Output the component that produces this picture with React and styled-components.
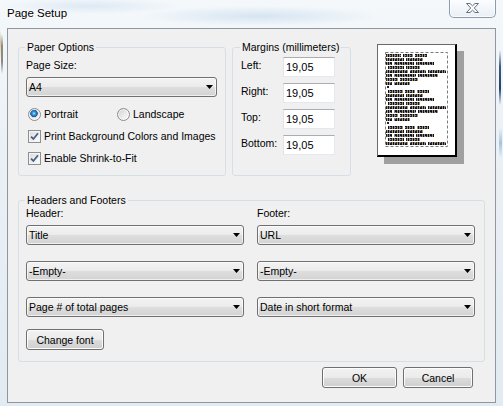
import React from "react";
import styled, { createGlobalStyle } from "styled-components";

const UI_FONT = `"Liberation Sans", Arial, sans-serif`;

const GlobalStyle = createGlobalStyle`
  html, body { margin: 0; padding: 0; }
  body { width: 503px; height: 406px; overflow: hidden; background: #e4ecf3; }
`;

const Window = styled.div`
  width: 503px;
  height: 406px;
  box-sizing: border-box;
  display: flex;
  flex-direction: column;
  font-family: ${UI_FONT};
  font-size: 10.5px;
  color: #000;
  background:
    linear-gradient(180deg, transparent 0, rgba(60, 50, 30, 0.55) 30%, rgba(60, 50, 30, 0.55) 70%, transparent 100%) 1px 34px / 2px 40px no-repeat,
    linear-gradient(180deg, transparent 0, rgba(200, 160, 80, 0.6) 40%, transparent 100%) 0 30px / 1px 30px no-repeat,
    linear-gradient(180deg, transparent 0, #3d5a80 30%, #22406a 70%, transparent 100%) 499px 50px / 2px 55px no-repeat,
    linear-gradient(180deg, transparent 0, #a9c3dc 50%, transparent 100%) 499px 128px / 3px 30px no-repeat,
    radial-gradient(ellipse 120px 10px at 260px 16px, rgba(170, 200, 228, 0.4), transparent),
    radial-gradient(ellipse 90px 8px at 90px 6px, rgba(180, 205, 230, 0.35), transparent),
    linear-gradient(180deg, #f4f8fb 0%, #e9f0f6 40%, #e2eaf2 100%);
`;

const TitleBar = styled.header`
  height: 28px;
  flex: none;
  display: flex;
  align-items: flex-start;
  justify-content: space-between;
`;

const Title = styled.h1`
  margin: 6px 0 0 7px;
  font-family: ${UI_FONT};
  font-size: 11.5px;
  font-weight: normal;
  line-height: 15px;
  color: #000;
  text-shadow: 0 0 6px #fff, 0 0 3px #fff;
`;

const CloseButton = styled.button`
  width: 47px;
  height: 19px;
  margin: -1px 7px 0 0;
  padding: 0;
  box-sizing: border-box;
  display: flex;
  align-items: center;
  justify-content: center;
  border: 1px solid #8c9cae;
  border-top: none;
  border-radius: 0 0 5px 5px;
  background: linear-gradient(180deg, rgba(255, 255, 255, 0.75), rgba(226, 234, 242, 0.6));
  box-shadow: inset 0 0 0 1px rgba(255, 255, 255, 0.7);
`;

const Client = styled.main`
  flex: 1;
  margin: 0 7px 3px 7px;
  box-sizing: border-box;
  border: 1px solid #8f969e;
  background: #f0f0f0;
  padding: 12px 10px 0 10px;
  display: flex;
  flex-direction: column;
`;

const TopRow = styled.div`
  display: flex;
  align-items: stretch;
`;

const Group = styled.fieldset`
  margin: 0;
  min-width: 0;
  box-sizing: border-box;
  width: ${(p) => p.$width}px;
  border: 1px solid #d5dfe5;
  border-radius: 3px;
`;

const PaperGroup = styled(Group)`
  padding: 5px 8px 9px 7px;
  margin-right: 6px;
`;

const MarginsGroup = styled(Group)`
  padding: 3px 10px 0 8px;
  display: grid;
  grid-template-columns: 42px 52px;
  grid-auto-rows: 20px;
  row-gap: 6px;
  align-content: start;
`;

const HeadersGroup = styled(Group)`
  margin-top: 18px;
  padding: 0 9px 11px 7px;
`;

/* legend sits inside the fieldset padding, so pull it back to 8px from the border */
const Legend = styled.legend`
  padding: 0 2px;
  margin-left: ${(p) => p.$shift ?? -1}px;
  line-height: 13px;
  white-space: nowrap;
`;

const FieldLabel = styled.div`
  line-height: 13px;
  white-space: nowrap;
`;

const MarginLabel = styled(FieldLabel)`
  margin-top: 2px;
`;

const ComboBox = styled.div`
  box-sizing: border-box;
  height: 20px;
  margin-top: ${(p) => p.$gap || 0}px;
  display: flex;
  align-items: center;
  justify-content: space-between;
  padding: 0 3px 0 2px;
  border: 1px solid #707070;
  border-radius: 3px;
  background: linear-gradient(180deg, #f3f3f3 0%, #ebebeb 50%, #dedede 51%, #d3d3d3 100%);
  box-shadow: inset 0 0 0 1px rgba(255, 255, 255, 0.65);
  white-space: nowrap;
`;

const TextBox = styled.input`
  box-sizing: border-box;
  width: 52px;
  height: 20px;
  margin: 0;
  padding: 0 2px;
  font-family: ${UI_FONT};
  font-size: 11px;
  color: #000;
  background: #fff;
  border: 1px solid #e3e9ef;
  border-top-color: #abadb3;
  border-left-color: #e2e3ea;
  outline: none;
`;

const OptionRow = styled.div`
  height: 15px;
  margin-top: ${(p) => p.$gap}px;
  display: grid;
  grid-template-columns: ${(p) => p.$columns || "auto"};
  align-items: center;
  padding-left: 2px;
`;

const Option = styled.label`
  display: flex;
  align-items: center;
  gap: 3px;
  white-space: nowrap;
  line-height: 13px;
`;

const RadioMark = styled.span`
  width: 13px;
  height: 13px;
  box-sizing: border-box;
  border-radius: 50%;
  border: 1px solid #8a8c8e;
  flex: none;
  background: ${(p) =>
    p.$checked
      ? `radial-gradient(circle at 45% 40%, #bfe9ff 0, #3b9be0 1.5px, #0c5a9e 3.5px, #d8d8d8 4px, #f2f2f2 5.5px)`
      : `linear-gradient(135deg, #d0d0d0 0%, #ededed 60%, #fafafa 100%)`};
  box-shadow: inset 0 0 0 1px rgba(255, 255, 255, 0.6);
`;

const CheckMark = styled.span`
  width: 13px;
  height: 13px;
  box-sizing: border-box;
  border: 1px solid #8e8f8f;
  flex: none;
  display: flex;
  align-items: center;
  justify-content: center;
  background: linear-gradient(135deg, #dadada 0%, #f0f0f0 60%, #ffffff 100%);
  box-shadow: inset 0 0 0 1px #f4f4f4;
`;

const Preview = styled.div`
  margin: 3px 0 0 26px;
  width: 80px;
  height: 113px;
  box-sizing: border-box;
  align-self: flex-start;
  background: #fff;
  border-top: 1px solid #6a6a6a;
  border-left: 1px solid #6a6a6a;
  border-right: 2px solid #000;
  border-bottom: 2px solid #000;
  box-shadow: 7px 7px 0 #a0a0a0;
`;

const Columns = styled.div`
  display: flex;
  gap: 13px;
`;

const Column = styled.div`
  width: 218px;
  display: flex;
  flex-direction: column;
  align-items: stretch;
`;

const Button = styled.button`
  box-sizing: border-box;
  width: ${(p) => p.$width}px;
  height: 21px;
  margin: ${(p) => p.$margin || 0};
  padding: 0;
  align-self: flex-start;
  font-family: ${UI_FONT};
  font-size: 10.5px;
  color: #000;
  border: 1px solid #707070;
  border-radius: 3px;
  background: linear-gradient(180deg, #f2f2f2 0%, #ebebeb 50%, #dddddd 51%, #cfcfcf 100%);
  box-shadow: inset 0 0 0 1px #fcfcfc;
`;

const ButtonRow = styled.div`
  margin-top: 5px;
  padding-right: 12px;
  display: flex;
  justify-content: flex-end;
  gap: 6px;
`;

const DropArrow = () => (
  <svg width="7" height="4" viewBox="0 0 7 4">
    <polygon points="0,0 7,0 3.5,4" fill="#000" />
  </svg>
);

const CloseIcon = () => (
  <svg width="15" height="12" viewBox="0 0 15 12">
    <path
      d="M1.5 1.5h3.5l2.5 2.3 2.5-2.3h3.5l-4.2 4.5 4.2 4.5h-3.5l-2.5-2.3-2.5 2.3h-3.5l4.2-4.5z"
      fill="#fbfcfd"
      stroke="#66717e"
      strokeWidth="1"
      strokeLinejoin="round"
    />
  </svg>
);

const Check = () => (
  <svg width="9" height="9" viewBox="0 0 9 9">
    <path d="M1 4.6 L3.4 7 L8 1.2" fill="none" stroke="#4a5e8c" strokeWidth="1.8" />
  </svg>
);

const Combo = ({ value, gap }) => (
  <ComboBox $gap={gap}>
    <span>{value}</span>
    <DropArrow />
  </ComboBox>
);

const Radio = ({ checked, children }) => (
  <Option>
    <RadioMark $checked={checked} />
    {children}
  </Option>
);

const Checkbox = ({ children }) => (
  <Option>
    <CheckMark>
      <Check />
    </CheckMark>
    {children}
  </Option>
);

// tiny "text" lines on the page thumbnail: [indent, word widths]
const BLOCK = [
  [8, [15, 10, 12]],
  [8, [18, 17]],
  [8, [6, 20, 18]],
  [10, [16, 14]],
  [8, [22, 16, 18]],
  [8, [6, 22, 20]],
  [8, [12, 18]],
  [8, [6, 16]],
];
const LAST = BLOCK.slice(0, 5);

function previewRows() {
  const rows = [];
  const push = (line, indent = 0) => rows.push({ x: line[0] + indent, words: line[1] });
  BLOCK.forEach((l) => push(l));
  rows.push({ dot: true });
  BLOCK.forEach((l, i) => push(l, i === 0 ? 2 : 0));
  rows.push({ dot: true });
  LAST.forEach((l, i) => push(l, i === 0 ? 2 : 0));
  return rows;
}

const PageThumb = () => {
  const rows = previewRows();
  return (
    <svg width="77" height="110" viewBox="0 0 77 110" style={{ display: "block" }}>
      <defs>
        <pattern id="glyphs" width="5" height="3" patternUnits="userSpaceOnUse">
          <rect x="0" y="0" width="5" height="3" fill="#8a8a96" />
          <rect x="0" y="0" width="1" height="3" fill="#111" />
          <rect x="2" y="0" width="2" height="1" fill="#111" />
          <rect x="2" y="2" width="2" height="1" fill="#222" />
          <rect x="3" y="1" width="1" height="1" fill="#333" />
          <rect x="4" y="1" width="1" height="2" fill="#c89a3a" opacity="0.6" />
        </pattern>
      </defs>
      <rect x="7.5" y="7.5" width="62" height="94" fill="none" stroke="#7a7a7a" strokeDasharray="3 2" />
      {rows.map((r, i) => {
        const y = 9 + i * 4;
        if (r.dot) return <rect key={i} x="9" y={y} width="2" height="2" fill="#222" />;
        let x = r.x;
        return r.words.map((w, j) => {
          const el = <rect key={`${i}-${j}`} x={x} y={y} width={w} height="3" fill="url(#glyphs)" />;
          x += w + 2;
          return el;
        });
      })}
    </svg>
  );
};

const MARGINS = ["Left:", "Right:", "Top:", "Bottom:"];

export default function App() {
  return (
    <>
      <GlobalStyle />
      <Window>
        <TitleBar>
          <Title>Page Setup</Title>
          <CloseButton aria-label="Close">
            <CloseIcon />
          </CloseButton>
        </TitleBar>
        <Client>
          <TopRow>
            <PaperGroup $width={208}>
              <Legend>Paper Options</Legend>
              <FieldLabel>Page Size:</FieldLabel>
              <Combo value="A4" gap={5} />
              <OptionRow $gap={10} $columns="89px auto">
                <Radio checked>Portrait</Radio>
                <Radio>Landscape</Radio>
              </OptionRow>
              <OptionRow $gap={7}>
                <Checkbox>Print Background Colors and Images</Checkbox>
              </OptionRow>
              <OptionRow $gap={7}>
                <Checkbox>Enable Shrink-to-Fit</Checkbox>
              </OptionRow>
            </PaperGroup>
            <MarginsGroup $width={119}>
              <Legend>Margins (millimeters)</Legend>
              {MARGINS.map((m) => (
                <React.Fragment key={m}>
                  <MarginLabel>{m}</MarginLabel>
                  <TextBox value="19,05" readOnly />
                </React.Fragment>
              ))}
            </MarginsGroup>
            <Preview>
              <PageThumb />
            </Preview>
          </TopRow>
          <HeadersGroup $width={467}>
            <Legend>Headers and Footers</Legend>
            <Columns>
              <Column>
                <FieldLabel>Header:</FieldLabel>
                <Combo value="Title" gap={5} />
                <Combo value="-Empty-" gap={16} />
                <Combo value="Page # of total pages" gap={16} />
                <Button $width={78} $margin="12px 0 0 0">
                  Change font
                </Button>
              </Column>
              <Column>
                <FieldLabel>Footer:</FieldLabel>
                <Combo value="URL" gap={5} />
                <Combo value="-Empty-" gap={16} />
                <Combo value="Date in short format" gap={16} />
              </Column>
            </Columns>
          </HeadersGroup>
          <ButtonRow>
            <Button $width={75}>OK</Button>
            <Button $width={70}>Cancel</Button>
          </ButtonRow>
        </Client>
      </Window>
    </>
  );
}
